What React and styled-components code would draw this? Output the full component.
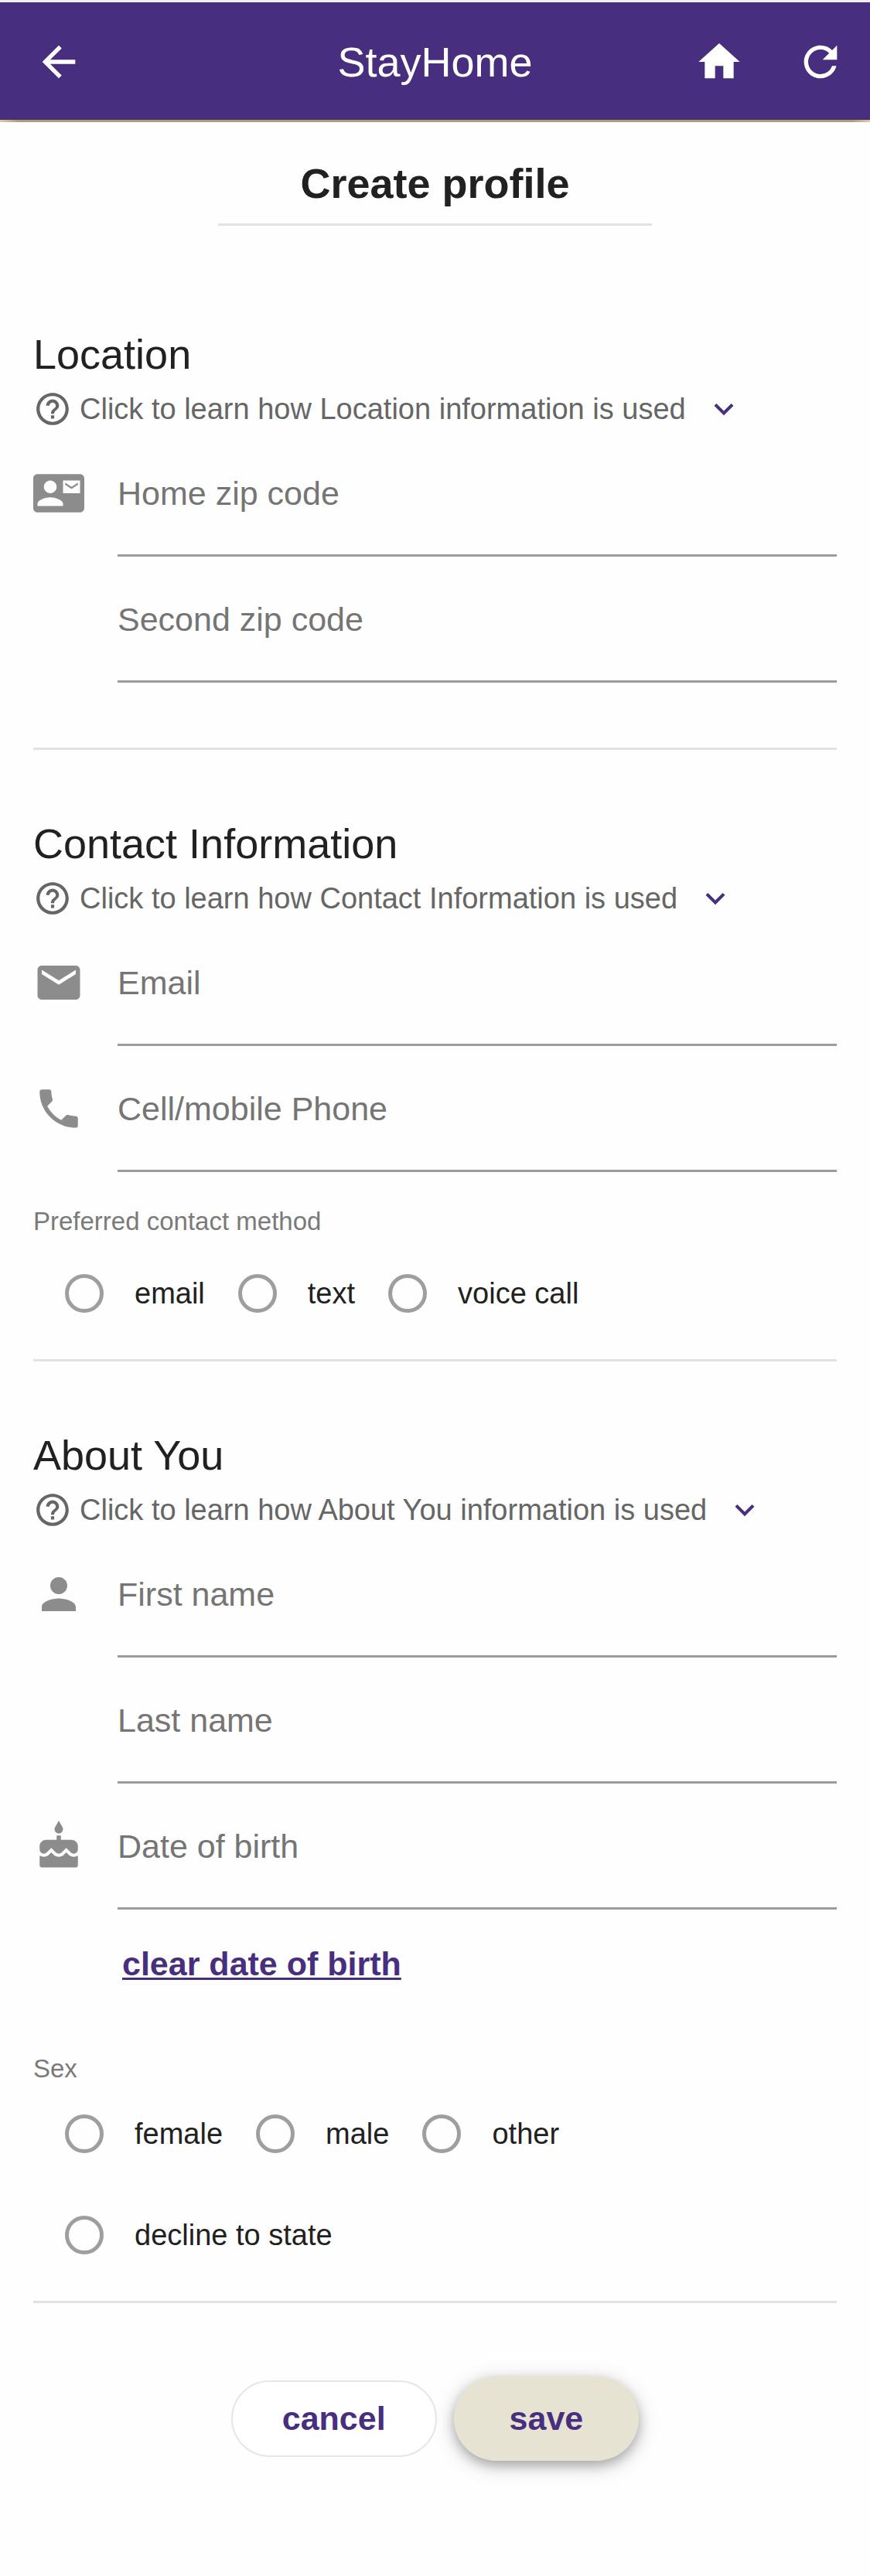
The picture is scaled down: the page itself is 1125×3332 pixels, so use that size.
import React from "react";
import styled, { createGlobalStyle } from "styled-components";
import {
  MdArrowBack,
  MdHome,
  MdRefresh,
  MdHelpOutline,
  MdExpandMore,
  MdContactMail,
  MdEmail,
  MdPhone,
  MdPerson,
  MdCake,
} from "react-icons/md";

const purple = "#482e7e";

const GlobalStyle = createGlobalStyle`
  *, *::before, *::after { box-sizing: border-box; }
  body {
    margin: 0;
    background: #fefefe;
    color: #212121;
    font-family: "Liberation Sans", Arial, Helvetica, sans-serif;
  }
  button, input { font: inherit; color: inherit; }
`;

const AppBar = styled.header`
  display: grid;
  grid-template-columns: 1fr auto 1fr;
  align-items: center;
  height: 158px;
  padding: 2px 32px 3px;
  background:
    linear-gradient(90deg, #dccd9a, #aea177 2%, #aea177 98%, #dccd9a) bottom / 100% 3px no-repeat,
    ${purple};
  color: #fff;
  border-top: 3px solid #f0f0f3;
`;

const AppTitle = styled.div`
  font-size: 54px;
  line-height: 64px;
`;

const BarActions = styled.div`
  display: flex;
  gap: 67px;
  padding-left: 12px;
  justify-content: ${(p) => (p.$end ? "flex-end" : "flex-start")};
`;

const IconButton = styled.button`
  display: flex;
  padding: 0;
  border: 0;
  background: none;
  font-size: 64px;
  cursor: pointer;
`;

const Page = styled.main`
  padding: 47px 43px 148px;
`;

const PageTitle = styled.h1`
  width: 54%;
  margin: 0 auto 134px;
  padding-bottom: 20px;
  border-bottom: 3px solid #e2e2e2;
  text-align: center;
  font-size: 54px;
  line-height: 64px;
`;

const Section = styled.section`
  margin-bottom: 89px;
  padding-bottom: ${(p) => p.$space}px;
  border-bottom: 3px solid #e2e2e2;
`;

const SectionTitle = styled.h2`
  margin: 0 0 14px;
  font-size: 54px;
  font-weight: 400;
  line-height: 64px;
`;

const HelpToggle = styled.button`
  display: flex;
  align-items: center;
  margin-bottom: 51px;
  padding: 0;
  border: 0;
  background: none;
  color: #666;
  font-size: 38px;
  line-height: 50px;
  cursor: pointer;

  svg { flex: none; font-size: 50px; }
  svg:last-child { margin-left: 24px; color: ${purple}; }
`;

const HelpText = styled.span`
  margin-left: 10px;
`;

const Fields = styled.div`
  display: grid;
  gap: 48px;
`;

const FieldRow = styled.div`
  display: grid;
  grid-template-columns: 66px 1fr;
  column-gap: 43px;
`;

const FieldIcon = styled.span`
  display: flex;
  color: #8c8c8c;
  font-size: 66px;
`;

const FieldBody = styled.div`
  display: flex;
  flex-direction: column;
`;

const FieldLabel = styled.label`
  color: #757575;
  font-size: 43px;
  line-height: 66px;
`;

const FieldInput = styled.input`
  width: 100%;
  height: 49px;
  padding: 0;
  border: 0;
  border-bottom: 3px solid #9c9c9c;
  border-radius: 0;
  background: none;
  font-size: 38px;
  outline: none;
`;

const ClearLink = styled.a`
  display: block;
  width: fit-content;
  margin: 45px 0 91px 115px;
  color: ${purple};
  font-size: 43px;
  font-weight: 700;
  line-height: 50px;
  text-decoration: underline;
  text-decoration-thickness: 3px;
  text-underline-offset: 3px;
`;

const RadioGroup = styled.fieldset`
  margin: ${(p) => p.$top}px 0 0;
  padding: 0;
  border: 0;
`;

const Legend = styled.legend`
  padding: 0;
  color: #7a7a7a;
  font-size: 33px;
  line-height: 40px;
`;

const Options = styled.div`
  display: flex;
  flex-wrap: wrap;
  gap: 81px 43px;
  max-width: 860px;
  padding: ${(p) => p.$top}px 0 0 41px;
`;

const Option = styled.label`
  display: flex;
  align-items: center;
  gap: 40px;
  font-size: 38px;
  line-height: 50px;
`;

const Radio = styled.input`
  appearance: none;
  width: 50px;
  height: 50px;
  margin: 0;
  border: 5px solid #9e9e9e;
  border-radius: 50%;

  &:checked {
    border-color: ${purple};
    background: radial-gradient(circle, ${purple} 45%, transparent 48%);
  }
`;

const Actions = styled.div`
  display: flex;
  align-items: center;
  justify-content: center;
  gap: 22px;
  padding-top: 6px;
`;

const PillButton = styled.button`
  height: ${(p) => (p.$primary ? 109 : 99)}px;
  padding: 0 ${(p) => (p.$primary ? 72 : 64)}px;
  border: ${(p) => (p.$primary ? "0" : "2px solid #e6e6e6")};
  border-radius: 56px;
  background: ${(p) => (p.$primary ? "#e7e3d3" : "#fff")};
  box-shadow: ${(p) =>
    p.$primary
      ? "0 6px 15px rgba(0,0,0,.26), 0 6px 30px rgba(0,0,0,.16)"
      : "none"};
  color: ${purple};
  font-size: 43px;
  font-weight: 700;
  cursor: pointer;
`;

function Help({ topic }) {
  return (
    <HelpToggle type="button" aria-expanded="false">
      <MdHelpOutline />
      <HelpText>Click to learn how {topic} is used</HelpText>
      <MdExpandMore />
    </HelpToggle>
  );
}

function Field({ id, label, icon, type = "text" }) {
  return (
    <FieldRow>
      <FieldIcon>{icon}</FieldIcon>
      <FieldBody>
        <FieldLabel htmlFor={id}>{label}</FieldLabel>
        <FieldInput id={id} name={id} type={type} />
      </FieldBody>
    </FieldRow>
  );
}

function Choice({ name, legend, options, top, gap }) {
  return (
    <RadioGroup $top={top}>
      <Legend>{legend}</Legend>
      <Options $top={gap}>
        {options.map((option) => (
          <Option key={option}>
            <Radio type="radio" name={name} value={option} />
            {option}
          </Option>
        ))}
      </Options>
    </RadioGroup>
  );
}

export default function App() {
  return (
    <>
      <GlobalStyle />
      <AppBar>
        <BarActions>
          <IconButton type="button" aria-label="Back"><MdArrowBack /></IconButton>
        </BarActions>
        <AppTitle>StayHome</AppTitle>
        <BarActions $end>
          <IconButton type="button" aria-label="Home"><MdHome /></IconButton>
          <IconButton type="button" aria-label="Refresh"><MdRefresh /></IconButton>
        </BarActions>
      </AppBar>

      <Page>
        <PageTitle>Create profile</PageTitle>

        <Section $space={84}>
          <SectionTitle>Location</SectionTitle>
          <Help topic="Location information" />
          <Fields>
            <Field id="home-zip" label="Home zip code" icon={<MdContactMail />} />
            <Field id="second-zip" label="Second zip code" />
          </Fields>
        </Section>

        <Section $space={60}>
          <SectionTitle>Contact Information</SectionTitle>
          <Help topic="Contact Information" />
          <Fields>
            <Field id="email" label="Email" type="email" icon={<MdEmail />} />
            <Field id="phone" label="Cell/mobile Phone" type="tel" icon={<MdPhone />} />
          </Fields>
          <Choice
            name="contact"
            legend="Preferred contact method"
            options={["email", "text", "voice call"]}
            top={44}
            gap={48}
          />
        </Section>

        <Section $space={60}>
          <SectionTitle>About You</SectionTitle>
          <Help topic="About You information" />
          <Fields>
            <Field id="first-name" label="First name" icon={<MdPerson />} />
            <Field id="last-name" label="Last name" />
            <Field id="birth-date" label="Date of birth" icon={<MdCake />} />
          </Fields>
          <ClearLink href="#birth-date">clear date of birth</ClearLink>
          <Choice
            name="sex"
            legend="Sex"
            options={["female", "male", "other", "decline to state"]}
            top={0}
            gap={39}
          />
        </Section>

        <Actions>
          <PillButton type="button">cancel</PillButton>
          <PillButton type="submit" $primary>save</PillButton>
        </Actions>
      </Page>
    </>
  );
}
